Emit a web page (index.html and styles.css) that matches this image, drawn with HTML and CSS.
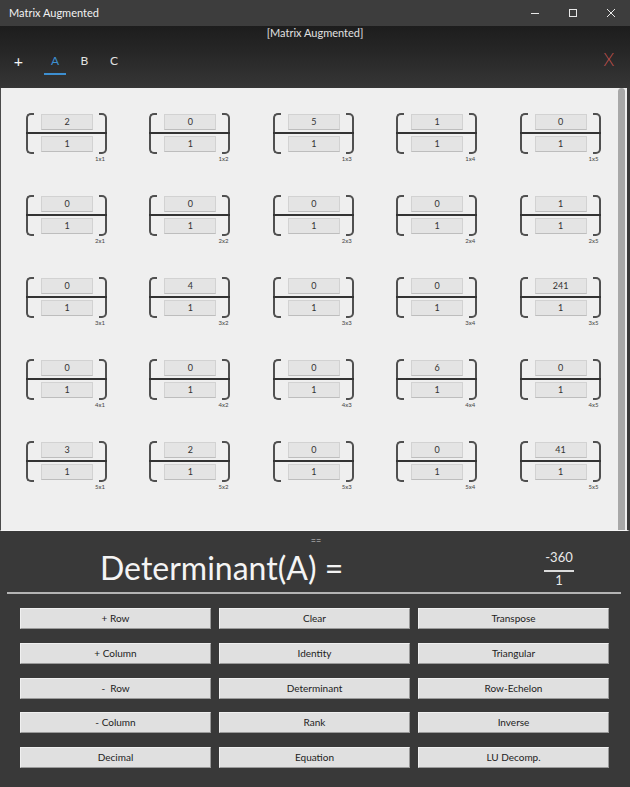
FILE: index.html
```html
<!DOCTYPE html>
<html>
<head>
<meta charset="utf-8">
<title>Matrix Augmented</title>
<link rel="stylesheet" href="styles.css">
</head>
<body>
<div class="window">
  <div class="titlebar">
    <span class="title">Matrix Augmented</span>
    <div class="controls">
      <span class="ctl"><svg width="10" height="10" viewBox="0 0 10 10"><path d="M1 5.5H9" stroke="#e8e8e8" stroke-width="1"/></svg></span>
      <span class="ctl"><svg width="10" height="10" viewBox="0 0 10 10"><rect x="1.5" y="1.5" width="7" height="7" fill="none" stroke="#e8e8e8" stroke-width="1"/></svg></span>
      <span class="ctl"><svg width="10" height="10" viewBox="0 0 10 10"><path d="M1 1L9 9M9 1L1 9" stroke="#e8e8e8" stroke-width="1"/></svg></span>
    </div>
  </div>
  <div class="toolbar">
    <div class="caption">[Matrix Augmented]</div>
    <div class="tabrow">
      <span class="add">+</span>
      <span class="tab active">A</span>
      <span class="tab">B</span>
      <span class="tab">C</span>
      <span class="spacer"></span>
      <span class="remove">X</span>
    </div>
  </div>
  <div class="content">
    <div class="grid" id="grid"></div>
    <div class="scroll"><div class="thumb"></div></div>
  </div>
  <div class="bottom">
    <div class="eq">==</div>
    <div class="result">
      <span class="expr">Determinant(A) =</span>
      <span class="frac"><span class="num">-360</span><span class="bar"></span><span class="den">1</span></span>
    </div>
    <div class="sep"></div>
    <div class="buttons">
      <button class="btn">+ Row</button>
      <button class="btn">Clear</button>
      <button class="btn">Transpose</button>
      <button class="btn">+ Column</button>
      <button class="btn">Identity</button>
      <button class="btn">Triangular</button>
      <button class="btn">-&nbsp; Row</button>
      <button class="btn">Determinant</button>
      <button class="btn">Row-Echelon</button>
      <button class="btn">- Column</button>
      <button class="btn">Rank</button>
      <button class="btn">Inverse</button>
      <button class="btn">Decimal</button>
      <button class="btn">Equation</button>
      <button class="btn">LU Decomp.</button>
    </div>
  </div>
</div>
<script>
  var vals = [[2,0,5,1,0],[0,0,0,0,1],[0,4,0,0,241],[0,0,0,6,0],[3,2,0,0,41]];
  var g = document.getElementById('grid');
  var html = '';
  for (var r = 0; r < 5; r++) {
    for (var c = 0; c < 5; c++) {
      html += '<div class="cell"><div class="frame">' +
        '<span class="br left"></span><span class="br right"></span><span class="mid"></span>' +
        '<span class="box top">' + vals[r][c] + '</span><span class="box bot">1</span>' +
        '</div><span class="lbl">' + (r+1) + 'x' + (c+1) + '</span></div>';
    }
  }
  g.innerHTML = html;
</script>
</body>
</html>
```

FILE: styles.css
```css
* { box-sizing: border-box; }
html, body { margin: 0; padding: 0; }
body {
  width: 630px;
  height: 787px;
  background: #393939;
  font-family: Lato, "Noto Sans", sans-serif;
  overflow: hidden;
}
.window { width: 630px; height: 787px; display: flex; flex-direction: column; }

.titlebar {
  height: 26px;
  background: #3d3d3d;
  display: flex;
  align-items: center;
  padding-left: 9px;
  flex: none;
}
.title { color: #f2f2f2; font-size: 11px; line-height: 14px; }
.controls { margin-left: auto; display: flex; align-items: center; height: 26px; }
.ctl { width: 38px; display: flex; justify-content: center; align-items: center; height: 26px; }
.ctl svg { display: block; }

.toolbar {
  height: 62px;
  flex: none;
  background: linear-gradient(#1d1d1d, #262626 40%, #363636);
  display: flex;
  flex-direction: column;
}
.caption {
  color: #e0e0e0;
  font-size: 11px;
  line-height: 14px;
  text-align: center;
  margin-top: 0;
  height: 15px;
}
.tabrow { display: flex; align-items: flex-start; padding-left: 12px; }
.add {
  width: 13px;
  text-align: center;
  color: #f5f5f5;
  font-size: 16px;
  line-height: 16px;
  padding-top: 12px;
  font-weight: 400;
  margin-right: 19px;
}
.tab {
  width: 22px;
  text-align: center;
  color: #e2e2e2;
  font-size: 12px;
  line-height: 16px;
  padding-top: 12px;
  padding-bottom: 4px;
  border-bottom: 2px solid transparent;
  margin-right: 7.5px;
}
.tab.active { color: #3d8fd1; border-bottom-color: #3d8fd1; }
.spacer { flex: 1; }
.remove {
  color: #c0504d;
  font-size: 17px;
  font-weight: 300;
  line-height: 16px;
  padding-top: 11px;
  margin-right: 16px;
}

.content {
  height: 443px;
  flex: none;
  background: #efefef;
  display: flex;
  border-left: 1px solid #4a4a4a;
  border-right: 3px solid #3a3a3a;
  border-bottom: 1px solid #f6f6f6;
}
.grid {
  width: 617px;
  padding: 25px 0 0 25px;
  display: grid;
  grid-template-columns: repeat(5, 81px);
  grid-auto-rows: 82px;
  column-gap: 42.4px;
  align-content: start;
}
.scroll { width: 9px; padding-right: 2px; }
.thumb {
  width: 7px;
  height: 100%;
  background: #a8a8a8;
  border-radius: 4px 4px 0 0;
}

.cell { position: relative; width: 81px; height: 48px; }
.frame { position: relative; width: 81px; height: 41px; }
.br {
  position: absolute;
  top: 0;
  width: 8px;
  height: 41px;
  border: 2px solid #505050;
}
.br.left { left: 0; border-right: none; border-radius: 5px 0 0 5px; }
.br.right { right: 0; border-left: none; border-radius: 0 5px 5px 0; }
.mid {
  position: absolute;
  left: 0;
  right: 0;
  top: 19px;
  height: 2px;
  background: #333;
}
.box {
  position: absolute;
  left: 15px;
  width: 52px;
  height: 16px;
  background: #e4e4e4;
  border: 1px solid #d2d2d2;
  border-bottom-color: #bdbdbd;
  color: #333;
  font-size: 9px;
  line-height: 14px;
  text-align: center;
}
.box.top { top: 1px; }
.box.bot { top: 23px; }
.lbl {
  position: absolute;
  right: 2px;
  top: 42px;
  font-size: 6px;
  line-height: 7px;
  color: #444;
}

.bottom { flex: 1; display: flex; flex-direction: column; }
.eq {
  height: 17px;
  text-align: center;
  color: #cfcfcf;
  font-size: 9px;
  line-height: 8px;
  padding-top: 6px;
  padding-left: 2px;
}
.result { height: 40px; display: flex; align-items: flex-start; padding-left: 100px; }
.expr { color: #f4f4f4; font-size: 32px; line-height: 40px; }
.frac {
  margin-left: auto;
  margin-right: 56px;
  margin-top: 2px;
  width: 30px;
  display: flex;
  flex-direction: column;
  align-items: center;
  color: #eaeaea;
  font-size: 13px;
  line-height: 15px;
}
.frac .bar { width: 30px; height: 1.5px; background: #dcdcdc; margin: 5px 0 1px; }
.sep {
  margin: 4px 9px 0 7px;
  height: 2px;
  background: #b4b4b4;
}
.buttons {
  margin-top: 14px;
  padding-left: 20px;
  display: grid;
  grid-template-columns: repeat(3, 191px);
  column-gap: 8px;
  grid-auto-rows: 21px;
  row-gap: 13.75px;
}
.btn {
  margin: 0;
  padding: 0;
  background: #e0e0e0;
  border: 1px solid #f0f0f0;
  border-right-color: #9a9a9a;
  border-bottom-color: #9a9a9a;
  color: #222;
  font-family: Lato, "Noto Sans", sans-serif;
  font-size: 10px;
  line-height: 19px;
  text-align: center;
}
```
